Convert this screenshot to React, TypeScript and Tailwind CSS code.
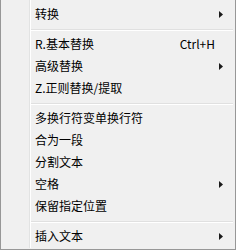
import type React from 'react'

type Entry =
  | { kind: 'item'; label: string; shortcut?: string; submenu?: boolean }
  | { kind: 'sep' }

const entries: Entry[] = [
  { kind: 'item', label: '转换', submenu: true },
  { kind: 'sep' },
  { kind: 'item', label: 'R.基本替换', shortcut: 'Ctrl+H' },
  { kind: 'item', label: '高级替换', submenu: true },
  { kind: 'item', label: 'Z.正则替换/提取' },
  { kind: 'sep' },
  { kind: 'item', label: '多换行符变单换行符' },
  { kind: 'item', label: '合为一段' },
  { kind: 'item', label: '分割文本' },
  { kind: 'item', label: '空格', submenu: true },
  { kind: 'item', label: '保留指定位置' },
  { kind: 'sep' },
  { kind: 'item', label: '插入文本', submenu: true },
]

function SubArrow() {
  return (
    <svg width="4" height="7" viewBox="0 0 4 7" className="block">
      <path d="M0 0 L4 3.5 L0 7 Z" fill="#1a1a1a" />
    </svg>
  )
}

function MenuItem({ label, shortcut, submenu }: { label: string; shortcut?: string; submenu?: boolean }) {
  return (
    <div className="flex h-[22px] items-center pl-[4px] pr-[10px] text-[12px] leading-none text-black">
      <span className="flex-1">{label}</span>
      {shortcut && <span className="mr-[8px]">{shortcut}</span>}
      {submenu && <SubArrow />}
    </div>
  )
}

function Separator() {
  return (
    <div className="flex h-[8px] flex-col pt-[4px]">
      <div className="h-px bg-[#e0e0e0]" />
      <div className="h-px bg-white" />
    </div>
  )
}

export default function App() {
  const font: React.CSSProperties = {}
  return (
    <div
      className="flex h-[250px] w-[236px] border-x border-b border-[#979797] bg-[#f0f0f0] pb-[1px] font-['Noto_Sans_CJK_SC','Noto_Sans',sans-serif]"
      style={font}
    >
      <div className="w-[28px]" />
      <div className="w-px bg-[#e2e3e3]" />
      <div className="w-px bg-white" />
      <div className="flex flex-1 flex-col pt-[3px] pr-[2px]">
        {entries.map((e, i) =>
          e.kind === 'sep' ? (
            <Separator key={i} />
          ) : (
            <MenuItem key={i} label={e.label} shortcut={e.shortcut} submenu={e.submenu} />
          ),
        )}
      </div>
    </div>
  )
}
